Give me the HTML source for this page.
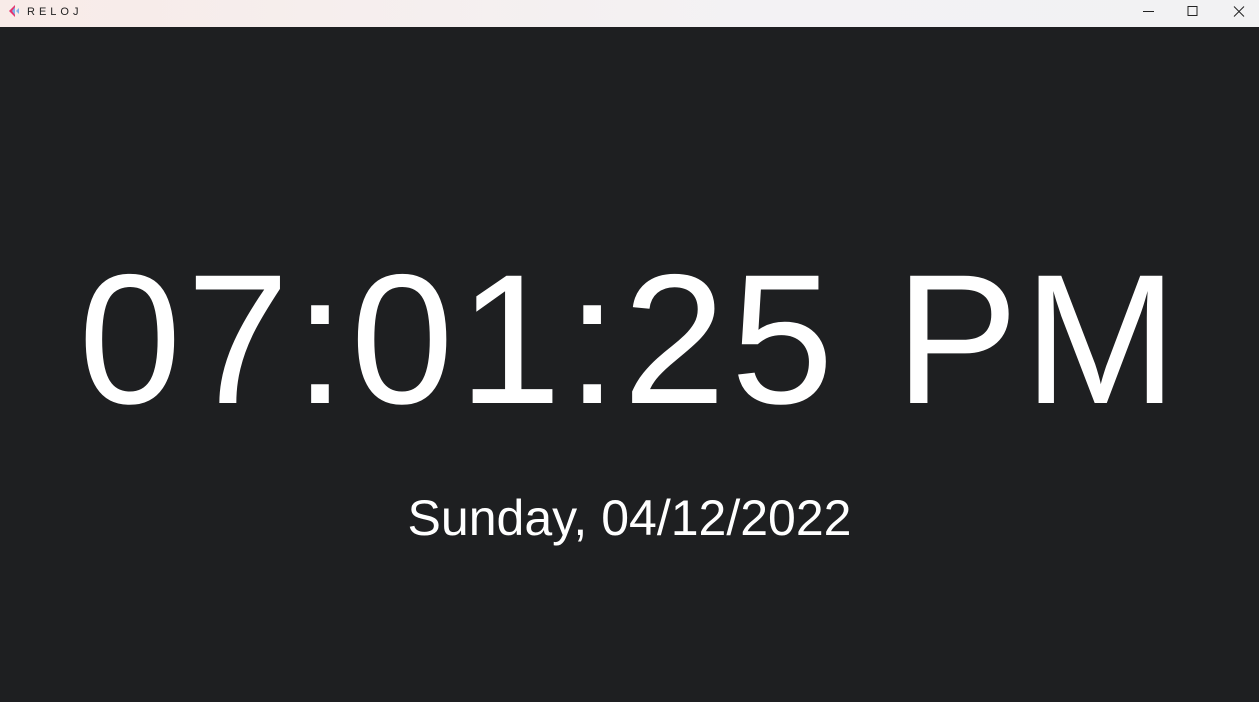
<!DOCTYPE html>
<html><head><meta charset="utf-8"><style>
html,body{margin:0;padding:0;width:1259px;height:702px;overflow:hidden;background:#1e1f21;font-family:"Liberation Sans",sans-serif}
.bar{position:absolute;left:0;top:0;width:1259px;height:27px;background:linear-gradient(90deg,#f8ebe8,#f3f2f4 60%,#f2f2f3)}
.title{position:absolute;left:27px;top:6px;font-size:11px;letter-spacing:4px;color:#222}
.t{position:absolute;left:0;width:1259px;text-align:center;color:#fff;white-space:nowrap}
</style></head><body>
<div class="bar">
<svg style="position:absolute;left:7px;top:4px" width="14" height="14" viewBox="0 0 14 14"><path d="M8 1 L2 7 L8 13 Z" fill="#e8336d"/><path d="M8 3 L5 7 L8 11 Z" fill="#7fb0e8"/><path d="M12 4 L9 7 L12 10 Z" fill="#7fb0e8"/></svg>
<div class="title">RELOJ</div>
<svg style="position:absolute;left:1140px;top:5px" width="110" height="16" viewBox="0 0 110 16"><path d="M3 6.5 H14" stroke="#222" stroke-width="1"/><rect x="48" y="1.5" width="9" height="9" fill="none" stroke="#222" stroke-width="1"/><path d="M94 1.5 L104 11.5 M104 1.5 L94 11.5" stroke="#222" stroke-width="1"/></svg>
</div>
<div class="t" style="top:225px;left:-4px;font-size:185px;line-height:230px;letter-spacing:5px;padding-left:5px">07:01:25 PM</div>
<div class="t" style="top:488px;font-size:50px;line-height:60px">Sunday, 04/12/2022</div>
</body></html>
